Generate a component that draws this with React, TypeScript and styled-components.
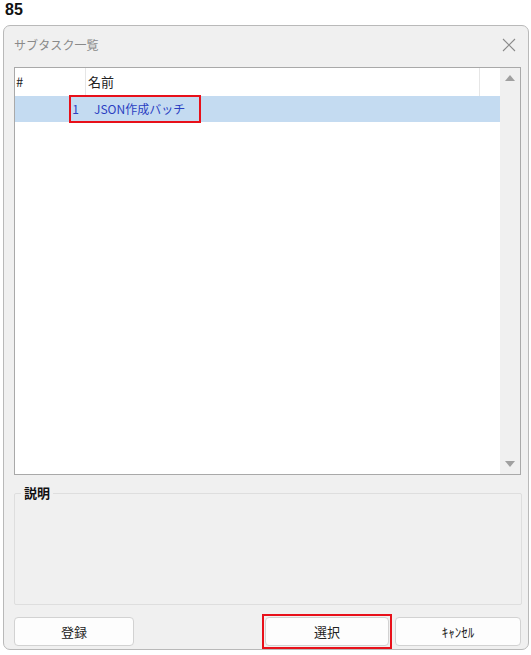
import styled, { createGlobalStyle } from "styled-components"

const GlobalStyle = createGlobalStyle`
    html, body {
        margin: 0;
        padding: 0;
        background: #ffffff;
        font-family: "Noto Sans CJK JP", "Liberation Sans", sans-serif;
    }
`

const Page = styled.div`
    width: 531px;
    height: 655px;
`

const Caption = styled.div`
    height: 25px;
    padding-left: 5px;
    font-family: "Liberation Sans", Arial, sans-serif;
    font-weight: 700;
    font-size: 16px;
    line-height: 20px;
    color: #111;
`

const Window = styled.div`
    margin-left: 3px;
    width: 526px;
    height: 625px;
    border: 1px solid #b9b9b9;
    border-radius: 7px;
    background: #f0f0f0;
    display: flex;
    flex-direction: column;
    padding: 0 7px 0 10px;
    box-sizing: border-box;
`

const TitleBar = styled.div`
    height: 38px;
    display: flex;
    align-items: center;
    justify-content: space-between;
`

const Title = styled.span`
    font-size: 12px;
    color: #8a8a8a;
    letter-spacing: 0.1px;
`

const CloseIcon = styled.svg`
    width: 14px;
    height: 14px;
    margin-right: 5px;
`

const ListBox = styled.div`
    margin-top: 3px;
    height: 409px;
    border: 1px solid #a9a9a9;
    background: #fff;
    display: flex;
    box-sizing: border-box;
`

const Grid = styled.div`
    flex: 1;
    display: flex;
    flex-direction: column;
`

const HeaderRow = styled.div`
    height: 28px;
    display: grid;
    grid-template-columns: 71px 394px 1fr;
    font-size: 13px;
    color: #222;
`

const HeaderCell = styled.div<{ $pad: number }>`
    display: flex;
    align-items: center;
    padding-left: ${(p) => p.$pad}px;
    border-right: 1px solid #e6e6e6;
    &:last-child {
        border-right: none;
    }
`

const DataRow = styled.div`
    position: relative;
    height: 26px;
    display: grid;
    grid-template-columns: 64px 1fr;
    background: #c4dbf1;
    font-size: 12px;
    color: #2b3fc2;
    align-items: center;
`

const NumCell = styled.div`
    text-align: right;
`

const NameCell = styled.div`
    padding-left: 15px;
`

// 注釈用の赤枠 (行の上に重ねる)
const RowMark = styled.div`
    position: absolute;
    left: 54px;
    top: -1px;
    width: 132px;
    height: 28px;
    border: 2px solid #e8101a;
    box-sizing: border-box;
`

const ScrollBar = styled.div`
    width: 20px;
    background: #f0f0f0;
    display: flex;
    flex-direction: column;
    justify-content: space-between;
    align-items: center;
    padding: 7px 0 7px;
`

const Arrow = styled.div<{ $down?: boolean }>`
    width: 0;
    height: 0;
    border-left: 5px solid transparent;
    border-right: 5px solid transparent;
    ${(p) => p.$down ? "border-top: 6px solid #a0a0a0;" : "border-bottom: 6px solid #a0a0a0;"}
`

const Group = styled.fieldset`
    margin: 9px 0 0;
    padding: 0;
    height: 121px;
    box-sizing: border-box;
    border: 1px solid #dedede;
    border-radius: 2px;
    width: 508px;
`

const GroupLabel = styled.legend`
    margin-left: 6px;
    padding: 0 3px;
    font-size: 13px;
    font-weight: 700;
    line-height: 18px;
    color: #111;
`

const ButtonBar = styled.div`
    margin-top: 9px;
    display: flex;
    align-items: center;
`

const Button = styled.button<{ $w: number }>`
    width: ${(p) => p.$w}px;
    height: 29px;
    background: #fdfdfd;
    border: 1px solid #d2d2d2;
    border-radius: 4px;
    font-family: "Noto Sans CJK JP", sans-serif;
    font-size: 13px;
    color: #222;
    padding: 0;
`

const Spacer = styled.div`
    flex: 1;
`

const ButtonMark = styled.div`
    border: 2px solid #e8101a;
    padding: 1px;
    margin-right: 3px;
    display: flex;
`

export default function App() {
    return (
        <Page>
            <GlobalStyle />
            <Caption>85</Caption>
            <Window>
                <TitleBar>
                    <Title>サブタスク一覧</Title>
                    <CloseIcon viewBox="0 0 14 14">
                        <path d="M1 1 L13 13 M13 1 L1 13" stroke="#8a8a8a" strokeWidth="1.1" fill="none" />
                    </CloseIcon>
                </TitleBar>

                <ListBox>
                    <Grid>
                        <HeaderRow>
                            <HeaderCell $pad={1}>#</HeaderCell>
                            <HeaderCell $pad={2}>名前</HeaderCell>
                            <HeaderCell $pad={0} />
                        </HeaderRow>
                        <DataRow>
                            <NumCell>1</NumCell>
                            <NameCell>JSON作成バッチ</NameCell>
                            <RowMark />
                        </DataRow>
                    </Grid>
                    <ScrollBar>
                        <Arrow />
                        <Arrow $down />
                    </ScrollBar>
                </ListBox>

                <Group>
                    <GroupLabel>説明</GroupLabel>
                </Group>

                <ButtonBar>
                    <Button $w={120}>登録</Button>
                    <Spacer />
                    <ButtonMark>
                        <Button $w={124}>選択</Button>
                    </ButtonMark>
                    <Button $w={126}>ｷｬﾝｾﾙ</Button>
                </ButtonBar>
            </Window>
        </Page>
    )
}
